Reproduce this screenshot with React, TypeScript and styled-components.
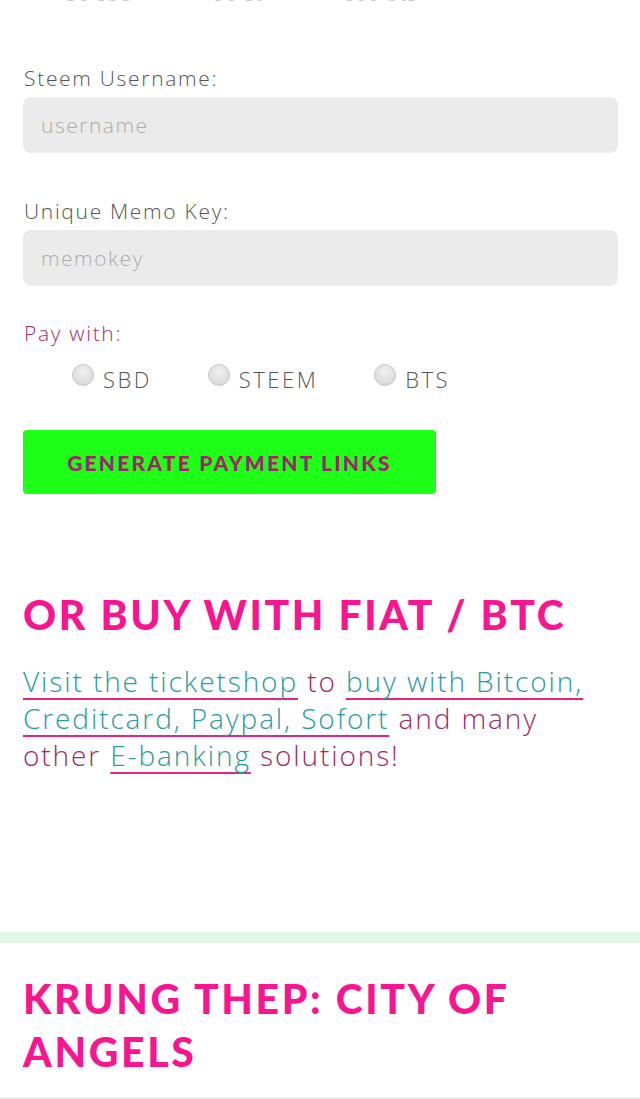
import React from "react";
import styled, { createGlobalStyle } from "styled-components";

const GlobalStyle = createGlobalStyle`
  html, body {
    margin: 0;
    padding: 0;
    background: #ffffff;
  }
  body {
    font-family: "Open Sans", "Noto Sans", sans-serif;
    overflow: hidden;
  }
`;

const Page = styled.div`
  width: 640px;
  overflow: hidden;
`;

const Section = styled.section`
  padding: 0 23px 0 23px;
`;

// bottom edge of the previous row, scrolled mostly out of view
const CutRow = styled.div`
  display: flex;
  margin-top: -18px;
  height: 23px;
  overflow: hidden;
  padding-left: 47px;
  gap: 62px;
  font-size: 20px;
  font-weight: 300;
  color: #c6c6c6;
  line-height: 23px;
  letter-spacing: 1px;
`;

const Field = styled.div<{ $gap?: number }>`
  margin-top: ${(p) => p.$gap ?? 0}px;
`;

const Label = styled.label<{ $accent?: boolean }>`
  display: block;
  font-size: 21px;
  font-weight: 300;
  letter-spacing: 1.7px;
  color: ${(p) => (p.$accent ? "#a3306c" : "#555555")};
  line-height: 26px;
  margin-bottom: 6px;
  padding-left: 1px;
`;

const Input = styled.input`
  display: block;
  box-sizing: border-box;
  width: 595px;
  height: 56px;
  border: none;
  border-radius: 8px;
  background: #ebebeb;
  padding: 0 18px;
  font-family: inherit;
  font-size: 21px;
  font-weight: 300;
  letter-spacing: 1.5px;
  color: #555;
  outline: none;
  &::placeholder {
    color: #ababab;
  }
`;

const RadioRow = styled.div`
  display: flex;
  align-items: center;
  padding-left: 49px;
  margin-top: 18px;
  gap: 56px;
`;

const RadioOption = styled.label`
  display: flex;
  align-items: center;
  gap: 9px;
  font-size: 22px;
  font-weight: 300;
  color: #555555;
  letter-spacing: 2.5px;
`;

const RadioDot = styled.span`
  width: 22px;
  height: 22px;
  border-radius: 50%;
  box-sizing: border-box;
  border: 1px solid #c8c8c8;
  background: radial-gradient(circle at 50% 35%, #f0f0f0 0%, #dcdcdc 70%, #d0d0d0 100%);
  position: relative;
  top: -4px;
`;

const GenerateButton = styled.button`
  display: block;
  margin-top: 36px;
  width: 413px;
  height: 64px;
  border: none;
  border-radius: 4px;
  background: #1dff17;
  color: #a3246a;
  font-family: "Lato", sans-serif;
  font-weight: 900;
  font-size: 21px;
  letter-spacing: 2.2px;
  text-transform: uppercase;
  cursor: pointer;
`;

const Heading = styled.h2<{ $top: number }>`
  margin: ${(p) => p.$top}px 0 0 0;
  font-family: "Lato", sans-serif;
  font-weight: 900;
  font-size: 41px;
  line-height: 53px;
  color: #f7168f;
  letter-spacing: 2.6px;
  text-transform: uppercase;
`;

const Paragraph = styled.p`
  margin: 22px 0 0 0;
  font-size: 28px;
  font-weight: 300;
  line-height: 37px;
  letter-spacing: 1.9px;
  color: #9c2c68;
`;

const Link = styled.a`
  color: #2a9ca0;
  text-decoration: underline;
  text-decoration-color: #e72483;
  text-decoration-thickness: 2px;
  text-underline-offset: 6px;
  text-decoration-skip-ink: none;
`;

const Band = styled.div`
  margin-top: 158px;
  height: 11px;
  background: #e2f7e6;
`;

const BottomRule = styled.div`
  margin-top: 19px;
  height: 2px;
  background: #f0f0f0;
`;

export default function App() {
  return (
    <Page>
      <GlobalStyle />
      <CutRow>
        <span>≈ 30 sbd</span>
        <span>≈ 90 st</span>
        <span>≈ 600 bts</span>
      </CutRow>
      <Section>
        <Field $gap={60}>
          <Label>Steem Username:</Label>
          <Input placeholder="username" />
        </Field>
        <Field $gap={45}>
          <Label>Unique Memo Key:</Label>
          <Input placeholder="memokey" />
        </Field>
        <Field $gap={34}>
          <Label $accent>Pay with:</Label>
        </Field>
        <RadioRow>
          <RadioOption>
            <RadioDot />
            SBD
          </RadioOption>
          <RadioOption>
            <RadioDot />
            STEEM
          </RadioOption>
          <RadioOption>
            <RadioDot />
            BTS
          </RadioOption>
        </RadioRow>
        <GenerateButton>Generate Payment Links</GenerateButton>
        <Heading $top={94}>Or buy with fiat / BTC</Heading>
        <Paragraph>
          <Link href="#">Visit the ticketshop</Link> to{" "}
          <Link href="#">buy with Bitcoin, Creditcard, Paypal, Sofort</Link>{" "}
          and many other <Link href="#">E-banking</Link> solutions!
        </Paragraph>
      </Section>
      <Band />
      <Section>
        <Heading $top={29}>Krung Thep: City of Angels</Heading>
      </Section>
      <BottomRule />
    </Page>
  );
}
